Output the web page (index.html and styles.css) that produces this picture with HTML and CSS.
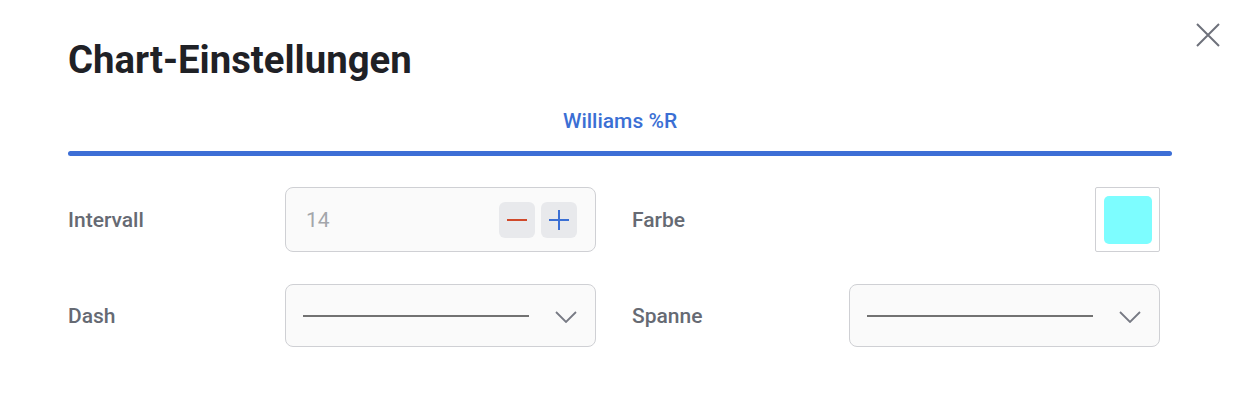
FILE: index.html
```html
<!DOCTYPE html>
<html lang="de">
<head>
<meta charset="utf-8">
<title>Chart-Einstellungen</title>
<link rel="stylesheet" href="styles.css">
</head>
<body>
<div class="dialog">
  <button class="close" aria-label="Schließen">
    <svg width="26" height="26" viewBox="0 0 26 26"><path d="M2 2 L24 24 M24 2 L2 24" stroke="#6e717b" stroke-width="2" fill="none"/></svg>
  </button>
  <h1 class="title">Chart-Einstellungen</h1>
  <div class="tabs">
    <div class="tab">Williams %R</div>
    <div class="tab-bar"></div>
  </div>
  <div class="form">
    <div class="field">
      <span class="label">Intervall</span>
      <div class="box stepper">
        <span class="value">14</span>
        <div class="btns">
          <span class="btn"><svg width="24" height="24" viewBox="0 0 24 24"><path d="M2 12 H22" stroke="#d0492a" stroke-width="2"/></svg></span>
          <span class="btn"><svg width="24" height="24" viewBox="0 0 24 24"><path d="M2 12 H22 M12 2 V22" stroke="#3b6fd4" stroke-width="2"/></svg></span>
        </div>
      </div>
    </div>
    <div class="field">
      <span class="label">Farbe</span>
      <div class="color-box"><div class="swatch"></div></div>
    </div>
    <div class="field">
      <span class="label">Dash</span>
      <div class="box select">
        <span class="line"></span>
        <svg class="chev" width="22" height="12" viewBox="0 0 22 12"><path d="M1 1 L11 11 L21 1" stroke="#777a84" stroke-width="1.8" fill="none"/></svg>
      </div>
    </div>
    <div class="field">
      <span class="label">Spanne</span>
      <div class="box select">
        <span class="line"></span>
        <svg class="chev" width="22" height="12" viewBox="0 0 22 12"><path d="M1 1 L11 11 L21 1" stroke="#777a84" stroke-width="1.8" fill="none"/></svg>
      </div>
    </div>
  </div>
</div>
</body>
</html>
```
FILE: styles.css
```css
html, body {
  margin: 0;
  padding: 0;
  background: #ffffff;
  font-family: Roboto, "Liberation Sans", Arial, sans-serif;
}
.dialog {
  position: relative;
  width: 1246px;
  height: 408px;
  box-sizing: border-box;
  padding: 37px 74px 0 68px;
}
.close {
  position: absolute;
  top: 22px;
  right: 25px;
  border: 0;
  background: transparent;
  padding: 0;
  width: 26px;
  height: 26px;
  cursor: pointer;
}
.close svg { display: block; }
.title {
  margin: 0;
  font-size: 38.3px;
  font-weight: 700;
  line-height: 46px;
  color: #1f2126;
}
.tabs {
  margin-top: 24px;
  display: flex;
  flex-direction: column;
  align-items: center;
}
.tab {
  font-size: 21px;
  font-weight: 500;
  color: #3b6fd4;
  line-height: 24px;
  margin-top: 2px;
}
.tab-bar {
  margin-top: 18px;
  width: 100%;
  height: 5px;
  border-radius: 3px;
  background: #3d6fd6;
}
.form {
  margin-top: 31px;
  display: grid;
  grid-template-columns: 528px 528px;
  column-gap: 36px;
  row-gap: 32px;
}
.field {
  display: flex;
  align-items: center;
  justify-content: space-between;
}
.label {
  font-size: 21px;
  font-weight: 500;
  color: #666a73;
}
.box {
  width: 311px;
  height: 65px;
  box-sizing: border-box;
  border: 1px solid #cfd0d4;
  border-radius: 8px;
  background: #fafafa;
  display: flex;
  align-items: center;
}
.stepper {
  padding: 0 18px 0 20px;
  justify-content: space-between;
}
.value {
  font-size: 21px;
  color: #a3a6ab;
}
.btns {
  display: flex;
  gap: 6px;
}
.btn {
  width: 36px;
  height: 36px;
  border-radius: 6px;
  background: #e8e9ec;
  display: flex;
  align-items: center;
  justify-content: center;
}
.btn svg { display: block; }
.color-box {
  width: 65px;
  height: 65px;
  box-sizing: border-box;
  border: 1px solid #cfd0d4;
  border-radius: 2px;
  display: flex;
  align-items: center;
  justify-content: center;
}
.swatch {
  width: 48px;
  height: 48px;
  border-radius: 5px;
  background: #7dfdff;
}
.select {
  height: 63px;
  padding: 0 18px 0 17px;
  gap: 26px;
}
.line {
  flex: 1;
  height: 2px;
  background: #727272;
}
.chev { display: block; margin-top: 2px; }
```
